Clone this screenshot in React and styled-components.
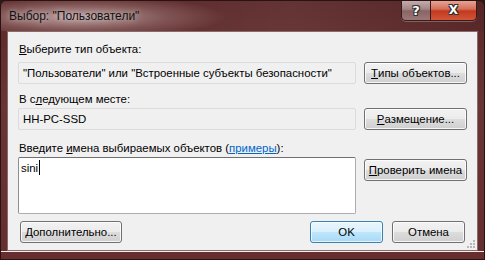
import React from 'react';
import styled, { createGlobalStyle } from 'styled-components';

const Global = createGlobalStyle`
  html, body {
    margin: 0;
    padding: 0;
    background: #2a1a1a;
  }
  body {
    font-family: "Segoe UI", "Liberation Sans", Arial, sans-serif;
    font-size: 11.4px;
    color: #000;
  }
`;

const Win = styled.div`
  width: 485px;
  height: 260px;
  box-sizing: border-box;
  display: flex;
  flex-direction: column;
  border: 1px solid #2b1212;
  border-radius: 6px 6px 0 0;
  background: linear-gradient(180deg, #5a2626 0%, #683434 40%, #662e2e 100%);
  position: relative;
  overflow: hidden;
`;

const TitleBar = styled.div`
  height: 30px;
  display: flex;
  align-items: center;
  padding-left: 8px;
  position: relative;
  background:
    radial-gradient(ellipse 150px 22px at 75px 16px, rgba(220, 200, 200, 0.75), rgba(200, 170, 170, 0.3) 60%, rgba(0, 0, 0, 0) 100%),
    linear-gradient(90deg, rgba(255, 255, 255, 0) 0%, rgba(255, 255, 255, 0.06) 60%, rgba(0, 0, 0, 0.05) 100%);
`;

const Title = styled.span`
  font-size: 12px;
  color: #111;
  margin-top: -1px;
  text-shadow: 0 0 6px rgba(255, 255, 255, 0.6);
`;

const Caption = styled.div`
  position: absolute;
  top: -1px;
  right: 7px;
  display: flex;
  border: 1px solid #3a1a1a;
  border-top: none;
  border-radius: 0 0 5px 5px;
  overflow: hidden;
  box-shadow: 0 1px 0 rgba(255, 255, 255, 0.25);
`;

const CapBtn = styled.div`
  width: ${p => p.$w}px;
  height: 20px;
  display: flex;
  align-items: center;
  justify-content: center;
  font-family: "DejaVu Sans", sans-serif;
  font-weight: bold;
  font-size: ${p => p.$fs}px;
  color: #fff;
  text-shadow: 0 0 1px #222, 1px 1px 0 #333, -1px -1px 0 #333, 1px -1px 0 #333, -1px 1px 0 #333;
  background: ${p => p.$red
    ? 'linear-gradient(180deg, #e9a99a 0%, #d6705b 45%, #c23a1f 55%, #d2553a 100%)'
    : 'linear-gradient(180deg, #c7b1b1 0%, #a58686 45%, #8a6464 55%, #9b7878 100%)'};
  border-left: ${p => p.$red ? '1px solid #3a1a1a' : 'none'};
`;

const Client = styled.div`
  flex: 1;
  margin: 0 6px 0 6px;
  background: #f0f0f0;
  border: 1px solid #8a6a6a;
  padding: 10px 12px 7px 10px;
  display: flex;
  flex-direction: column;
  position: relative;
`;

const BottomFrame = styled.div`
  height: 7px;
  border-top: 1px solid #f6eeee;
`;

const Label = styled.div`
  line-height: 15px;
  padding-left: 1px;
  margin-bottom: ${p => p.$mb}px;
  white-space: nowrap;
`;

const Row = styled.div`
  display: grid;
  grid-template-columns: 338px 103px;
  column-gap: 8px;
  align-items: ${p => p.$top ? 'start' : 'center'};
  margin-bottom: ${p => p.$mb}px;
`;

const Field = styled.div`
  height: 22px;
  box-sizing: border-box;
  border: 1px solid #dcdcdc;
  border-radius: 2px;
  background: #f0f0f0;
  padding: 0 4px;
  display: flex;
  align-items: center;
  white-space: nowrap;
  overflow: hidden;
`;

const TextArea = styled.div`
  height: 57px;
  box-sizing: border-box;
  border: 1px solid #abadb3;
  border-top-color: #707070;
  border-left-color: #8e8e8e;
  border-radius: 2px;
  background: #fff;
  padding: 2px 2px;
  line-height: 16px;
`;

const Caret = styled.span`
  display: inline-block;
  width: 1px;
  height: 15px;
  background: #000;
  vertical-align: -3px;
  margin-left: 1px;
`;

const Button = styled.div`
  height: 22px;
  width: ${p => p.$w ? `${p.$w}px` : 'auto'};
  box-sizing: border-box;
  border: 1px solid ${p => p.$def ? '#3c7fb1' : '#707070'};
  border-radius: 3px;
  display: flex;
  align-items: center;
  justify-content: center;
  white-space: nowrap;
  box-shadow: inset 0 0 0 1px ${p => p.$def ? 'rgba(255,255,255,0.7)' : 'rgba(255,255,255,0.8)'};
  background: ${p => p.$def
    ? 'linear-gradient(180deg, #eaf6fd 0%, #d9f0fc 50%, #bee6fd 51%, #a7d9f5 100%)'
    : 'linear-gradient(180deg, #f2f2f2 0%, #ebebeb 50%, #dddddd 51%, #cfcfcf 100%)'};
`;

const U = styled.span`
  text-decoration: underline;
`;

const Link = styled.span`
  color: #0066cc;
  text-decoration: underline;
`;

const Footer = styled.div`
  margin-top: auto;
  display: flex;
  align-items: center;
  padding-left: 2px;
`;

const Spacer = styled.div`
  flex: 1;
`;

const Gap = styled.div`
  width: 9px;
`;

const Grip = styled.svg`
  position: absolute;
  right: 1px;
  bottom: 1px;
`;

export default function App() {
  return (
    <>
      <Global />
      <Win>
        <TitleBar>
          <Title>Выбор: "Пользователи"</Title>
          <Caption>
            <CapBtn $w={28} $fs={13}>?</CapBtn>
            <CapBtn $w={45} $fs={12} $red>X</CapBtn>
          </Caption>
        </TitleBar>
        <Client>
          <Label $mb={5}><U>В</U>ыберите тип объекта:</Label>
          <Row $mb={8}>
            <Field>"Пользователи" или "Встроенные субъекты безопасности"</Field>
            <Button><U>Т</U>ипы объектов...</Button>
          </Row>
          <Label $mb={1}>В с<U>л</U>едующем месте:</Label>
          <Row $mb={11}>
            <Field>HH-PC-SSD</Field>
            <Button><U>Р</U>азмещение...</Button>
          </Row>
          <Label $mb={1}>Введите <U>и</U>мена выбираемых объектов (<Link>примеры</Link>):</Label>
          <Row $top>
            <TextArea>sini<Caret /></TextArea>
            <Button style={{ marginTop: 2 }}><U>П</U>роверить имена</Button>
          </Row>
          <Footer>
            <Button $w={102}><U>Д</U>ополнительно...</Button>
            <Spacer />
            <Button $w={73} $def>OK</Button>
            <Gap />
            <Button $w={73}>Отмена</Button>
          </Footer>
          <Grip width="10" height="10" viewBox="0 0 10 10">
            <g fill="#b8b8b8">
              <rect x="7" y="1" width="2" height="2" />
              <rect x="4" y="4" width="2" height="2" />
              <rect x="7" y="4" width="2" height="2" />
              <rect x="1" y="7" width="2" height="2" />
              <rect x="4" y="7" width="2" height="2" />
              <rect x="7" y="7" width="2" height="2" />
            </g>
          </Grip>
        </Client>
        <BottomFrame />
      </Win>
    </>
  );
}
